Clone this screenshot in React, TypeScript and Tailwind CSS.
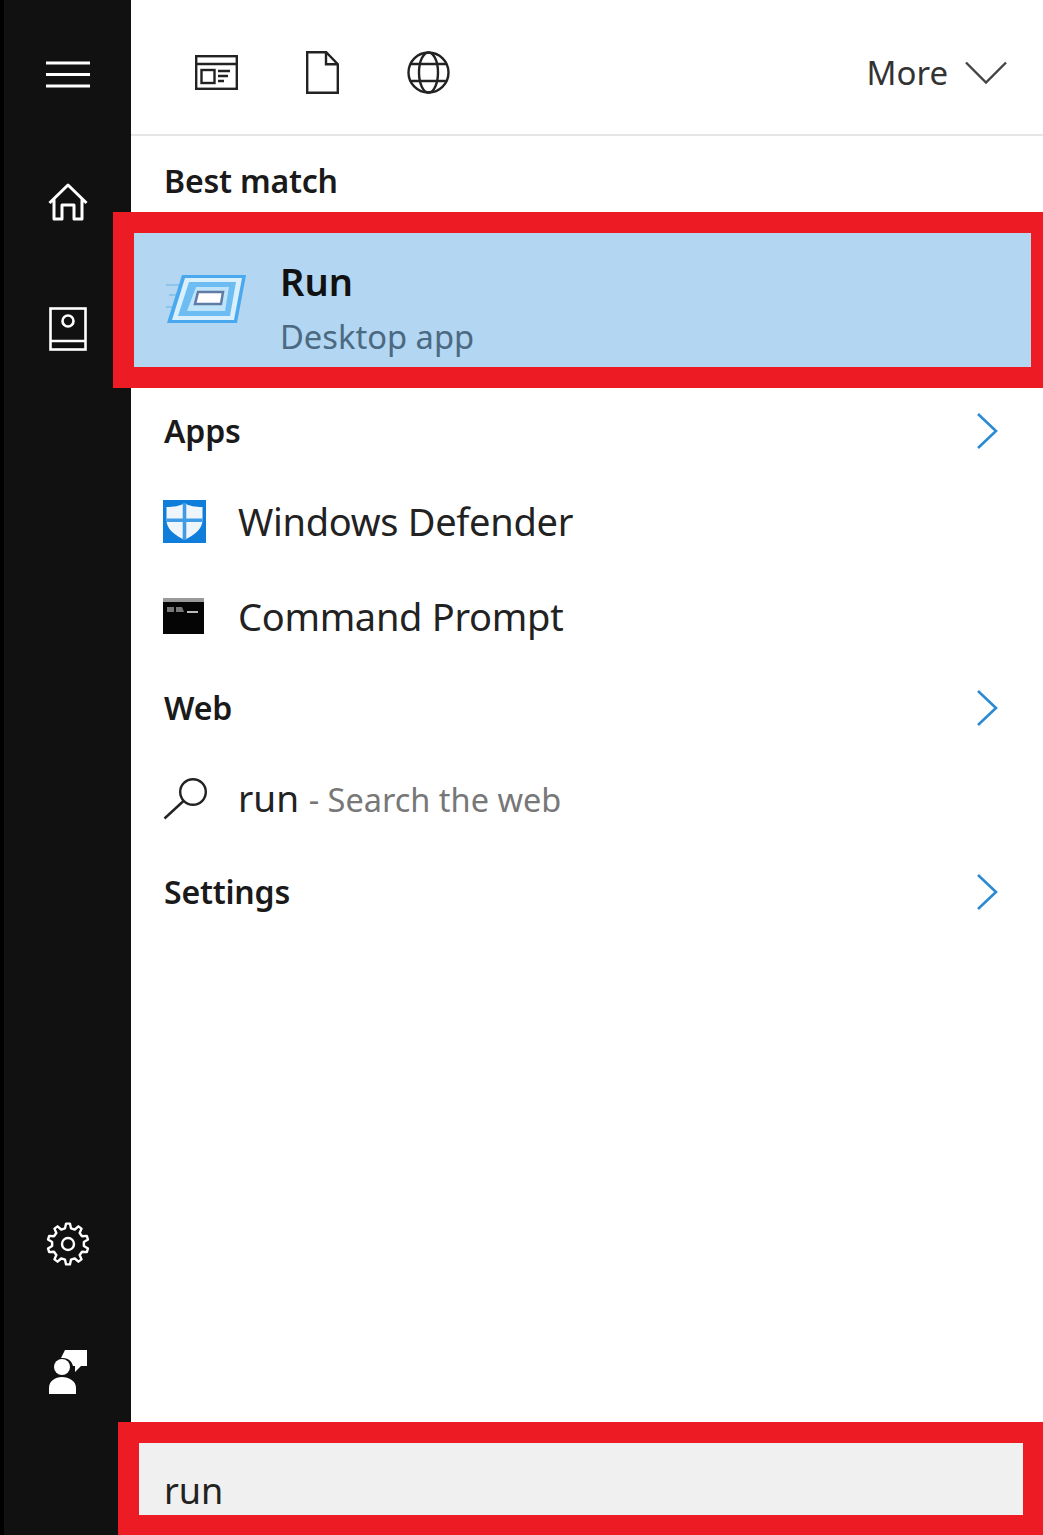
import React from "react";

const font = "font-['Noto_Sans','Open_Sans',sans-serif]";

const Chevron = () => (
  <svg width="24" height="38" viewBox="0 0 24 38" fill="none" stroke="#2a8ad4" strokeWidth="2.6">
    <path d="M3 2l18 17L3 36" />
  </svg>
);

// toothed outline for the settings gear
const gearPath = (teeth: number, outer: number, inner: number) => {
  const pts: string[] = [];
  const step = (Math.PI * 2) / teeth;
  for (let i = 0; i < teeth; i++) {
    const a = i * step - Math.PI / 2;
    const corners: [number, number][] = [
      [a - step * 0.3, inner],
      [a - step * 0.15, outer],
      [a + step * 0.15, outer],
      [a + step * 0.3, inner],
    ];
    corners.forEach(([t, r]) => {
      pts.push(`${(22 + r * Math.cos(t)).toFixed(2)} ${(22 + r * Math.sin(t)).toFixed(2)}`);
    });
  }
  return `M${pts.join("L")}Z`;
};

const SideIcons = {
  menu: (
    <svg width="44" height="28" viewBox="0 0 44 28" stroke="#fff" strokeWidth="3">
      <path d="M0 2h44M0 13.500h44M0 25h44" />
    </svg>
  ),
  home: (
    <svg width="40" height="38" viewBox="0 0 40 38" fill="none" stroke="#fff" strokeWidth="3" strokeLinejoin="round">
      <path d="M1.500 20L20 2l18.500 18M6 16v20h8V22h12v14h8V16" />
    </svg>
  ),
  book: (
    <svg width="38" height="44" viewBox="0 0 38 44" fill="none" stroke="#fff" strokeWidth="2.600">
      <rect x="1.500" y="1.500" width="35" height="41" />
      <path d="M1.500 34h35" />
      <circle cx="19" cy="14" r="5.500" />
    </svg>
  ),
  gear: (
    <svg width="44" height="44" viewBox="0 0 44 44" fill="none" stroke="#fff" strokeWidth="2.400" strokeLinejoin="round">
      <path d={gearPath(10, 20.5, 16)} />
      <circle cx="22" cy="22" r="6" />
    </svg>
  ),
  person: (
    <svg width="38" height="44" viewBox="0 0 38 44" fill="#fff">
      <path d="M16 0h22v16h-6l-6 6v-6h-2c-1-4-4-8-10-8h-2z" />
      <circle cx="13" cy="17" r="8" />
      <path d="M0 44v-6c0-7 6-11 13-11s14 4 14 11v6z" />
    </svg>
  ),
};

const TopIcons = () => (
  <div className="flex items-center gap-[68px]">
    <svg width="43" height="35" viewBox="0 0 43 35" fill="none" stroke="#222" strokeWidth="2.400">
      <rect x="1.200" y="1.200" width="40.600" height="32.600" />
      <path d="M1 9h41" />
      <rect x="6.500" y="15" width="13" height="13" />
      <path d="M23 16h12M23 21h10M23 26h6" />
    </svg>
    <svg width="33" height="43" viewBox="0 0 33 43" fill="none" stroke="#222" strokeWidth="2.400">
      <path d="M1.200 1.200h19l11.600 12v28.600H1.200zM20 1.200v12h11.800" />
    </svg>
    <svg width="43" height="43" viewBox="0 0 43 43" fill="none" stroke="#222" strokeWidth="2.400">
      <circle cx="21.500" cy="21.500" r="20" />
      <ellipse cx="21.500" cy="21.500" rx="9.500" ry="20" />
      <path d="M4 13h35M4 30h35" />
    </svg>
  </div>
);

const RunIcon = () => (
  <svg className="blur-[0.6px]" width="84" height="54" viewBox="0 0 84 54" fill="none">
    <path d="M2 12h14M5 22h8M2 34h10" stroke="#8cc4ea" strokeWidth="2" />
    <path d="M18 2h64l-9 48H3z" fill="#4aa8ee" />
    <path d="M21 5h57l-8 42H8z" fill="#d9f0fc" />
    <path d="M25 9h47l-6 34H14z" fill="#6dbdf2" />
    <path d="M32 14h33l-4 24H23z" fill="#bfe3f9" />
    <path d="M34 19h25l-2 12H31z" fill="#fff" stroke="#5f7ba6" strokeWidth="2.500" />
  </svg>
);

const DefenderIcon = () => (
  <svg width="43" height="43" viewBox="0 0 43 43">
    <rect width="43" height="43" fill="#0f7edb" />
    <path d="M21.500 3c4 3 11 4 18 4v13c0 9-8 15-18 20-10-5-18-11-18-20V7c7 0 14-1 18-4z" fill="#eef6fc" />
    <path d="M19.700 3h3.600v37h-3.600zM3.500 18.500h36v3.600h-36z" fill="#3f9be3" />
  </svg>
);

const CmdIcon = () => (
  <svg width="41" height="36" viewBox="0 0 41 36">
    <rect width="41" height="36" fill="#050505" />
    <rect width="41" height="4" fill="#9a9a9a" />
    <path d="M4 9h7v5H4zM13 9h6l2 5h-8z" fill="#777" />
    <rect x="24" y="13" width="11" height="2" fill="#bbb" />
  </svg>
);

const SearchIcon = () => (
  <svg width="45" height="43" viewBox="0 0 45 43" fill="none" stroke="#222" strokeWidth="2.400">
    <circle cx="30" cy="15" r="12.800" />
    <path d="M20.500 24L1.500 41.500" />
  </svg>
);

const Heading = ({ label, rowClass, arrow }: { label: string; rowClass: string; arrow?: boolean }) => (
  <div className={`flex items-center justify-between pl-[33px] pr-[44px] ${rowClass}`}>
    <span className="text-[32px] font-semibold leading-none tracking-[-0.2px] text-[#1a1a1a]">{label}</span>
    {arrow && <Chevron />}
  </div>
);

export default function App() {
  return (
    <div className={`flex h-[1535px] w-[1043px] overflow-hidden bg-white ${font}`}>
      <aside className="flex w-[131px] shrink-0 flex-col items-center border-l-4 border-black bg-[#111111]">
        <div className="mt-[61px] flex flex-col items-center">
          {SideIcons.menu}
          <div className="mt-[94px]">{SideIcons.home}</div>
          <div className="mt-[86px]">{SideIcons.book}</div>
        </div>
        <div className="mt-auto mb-[141px] flex flex-col items-center">
          {SideIcons.gear}
          <div className="mt-[84px]">{SideIcons.person}</div>
        </div>
      </aside>

      <main className="flex min-w-0 flex-1 flex-col">
        <header className="flex h-[136px] shrink-0 items-center justify-between border-b-2 border-[#e6e6e6] pt-[11px] pr-[36px] pl-[64px]">
          <TopIcons />
          <div className="flex items-center gap-[17px]">
            <span className="text-[33px] leading-none text-[#333333]">More</span>
            <svg width="42" height="24" viewBox="0 0 42 24" fill="none" stroke="#444" strokeWidth="2.400">
              <path d="M1 1.500l20 20 20-20" />
            </svg>
          </div>
        </header>

        <Heading label="Best match" rowClass="h-[97px] shrink-0 pb-[7px]" />

        <div className="mr-[12px] ml-[3px] flex h-[134px] shrink-0 items-center bg-[#b3d6f2] pl-[30px] outline-[21px] outline-[#ed1c24]">
          <RunIcon />
          <div className="ml-[32px] flex flex-col pt-[14px]">
            <span className="text-[38px] leading-[48px] font-semibold text-[#111111]">Run</span>
            <span className="mt-[12px] text-[32.700px] leading-[40px] text-[#4b6a82]">Desktop app</span>
          </div>
        </div>

        <Heading label="Apps" arrow rowClass="mt-[20px] h-[88px] shrink-0" />

        <div className="flex h-[92px] shrink-0 items-center gap-[32px] pl-[32px]">
          <DefenderIcon />
          <span className="text-[38px] leading-none tracking-[-0.3px] text-[#222222]">Windows Defender</span>
        </div>
        <div className="flex h-[98px] shrink-0 items-center gap-[34px] pl-[32px]">
          <CmdIcon />
          <span className="text-[38px] leading-none tracking-[-0.3px] text-[#222222]">Command Prompt</span>
        </div>

        <Heading label="Web" arrow rowClass="h-[86px] shrink-0" />

        <div className="flex h-[94px] shrink-0 items-center gap-[30px] pl-[32px]">
          <SearchIcon />
          <span className="text-[37px] leading-none text-[#222222]">
            run <span className="text-[32.500px] text-[#777777]">- Search the web</span>
          </span>
        </div>

        <Heading label="Settings" arrow rowClass="h-[94px] shrink-0" />

        <div className="mt-auto mr-[20px] mb-[20px] ml-[8px] flex h-[72px] shrink-0 items-end bg-[#f0f0f0] pl-[25px] outline-[21px] outline-[#ed1c24]">
          <span className="text-[36px] leading-[48px] text-[#222222]">run</span>
        </div>
      </main>
    </div>
  );
}
